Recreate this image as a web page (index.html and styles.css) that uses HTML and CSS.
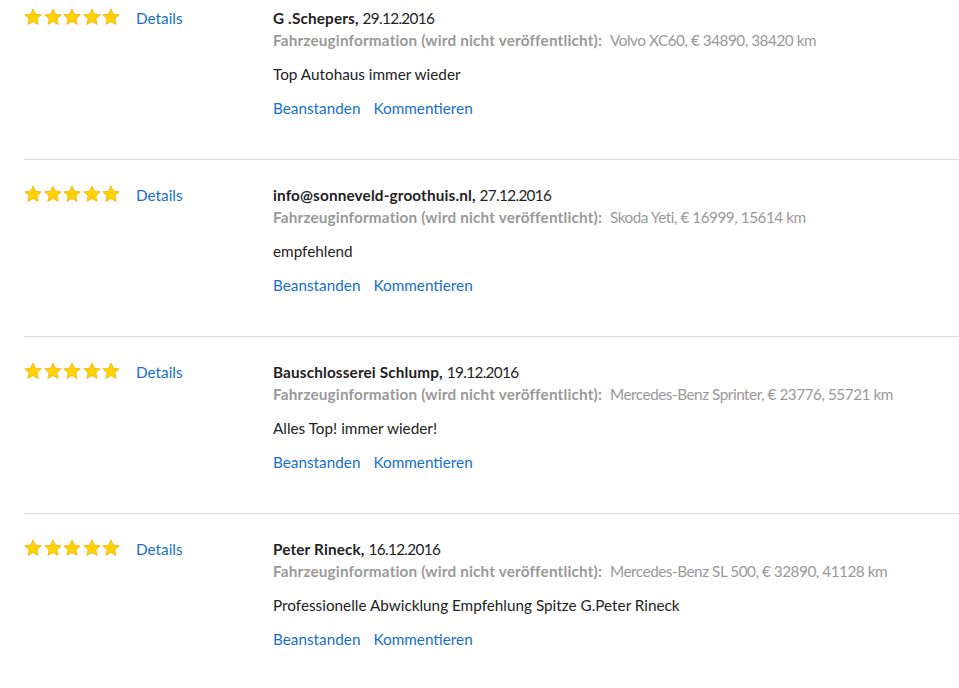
FILE: index.html
```html
<!DOCTYPE html>
<html lang="de">

<head>
    <meta charset="UTF-8">
    <meta name="viewport" content="width=device-width, initial-scale=1.0">
    <title>Bewertungen</title>
    <link rel="stylesheet" href="styles.css">
</head>

<body>
    <svg width="0" height="0" class="defs">
        <defs>
            <symbol id="star" viewBox="0 0 20 20">
                <path d="M10 1l2.7 5.9 6.4.7-4.8 4.3 1.4 6.3L10 15l-5.7 3.2 1.4-6.3-4.8-4.3 6.4-.7z" />
            </symbol>
        </defs>
    </svg>

    <ul class="reviews">
        <li class="review">
            <div class="rating">
                <span class="stars">
                    <svg><use href="#star"/></svg><svg><use href="#star"/></svg><svg><use href="#star"/></svg><svg><use href="#star"/></svg><svg><use href="#star"/></svg>
                </span>
                <a class="details">Details</a>
            </div>
            <div class="body">
                <p class="author"><b>G .Schepers,</b> <span class="date">29.12.2016</span></p>
                <p class="vehicle"><b>Fahrzeuginformation (wird nicht veröffentlicht):</b> <span class="car">Volvo XC60, € 34890, 38420 km</span></p>
                <p class="comment">Top Autohaus immer wieder</p>
                <p class="actions"><a>Beanstanden</a><a>Kommentieren</a></p>
            </div>
        </li>
        <li class="review">
            <div class="rating">
                <span class="stars">
                    <svg><use href="#star"/></svg><svg><use href="#star"/></svg><svg><use href="#star"/></svg><svg><use href="#star"/></svg><svg><use href="#star"/></svg>
                </span>
                <a class="details">Details</a>
            </div>
            <div class="body">
                <p class="author"><b>info@sonneveld-groothuis.nl,</b> <span class="date">27.12.2016</span></p>
                <p class="vehicle"><b>Fahrzeuginformation (wird nicht veröffentlicht):</b> <span class="car">Skoda Yeti, € 16999, 15614 km</span></p>
                <p class="comment">empfehlend</p>
                <p class="actions"><a>Beanstanden</a><a>Kommentieren</a></p>
            </div>
        </li>
        <li class="review">
            <div class="rating">
                <span class="stars">
                    <svg><use href="#star"/></svg><svg><use href="#star"/></svg><svg><use href="#star"/></svg><svg><use href="#star"/></svg><svg><use href="#star"/></svg>
                </span>
                <a class="details">Details</a>
            </div>
            <div class="body">
                <p class="author"><b>Bauschlosserei Schlump,</b> <span class="date">19.12.2016</span></p>
                <p class="vehicle"><b>Fahrzeuginformation (wird nicht veröffentlicht):</b> <span class="car">Mercedes-Benz Sprinter, € 23776, 55721 km</span></p>
                <p class="comment">Alles Top! immer wieder!</p>
                <p class="actions"><a>Beanstanden</a><a>Kommentieren</a></p>
            </div>
        </li>
        <li class="review">
            <div class="rating">
                <span class="stars">
                    <svg><use href="#star"/></svg><svg><use href="#star"/></svg><svg><use href="#star"/></svg><svg><use href="#star"/></svg><svg><use href="#star"/></svg>
                </span>
                <a class="details">Details</a>
            </div>
            <div class="body">
                <p class="author"><b>Peter Rineck,</b> <span class="date">16.12.2016</span></p>
                <p class="vehicle"><b>Fahrzeuginformation (wird nicht veröffentlicht):</b> <span class="car">Mercedes-Benz SL 500, € 32890, 41128 km</span></p>
                <p class="comment">Professionelle Abwicklung Empfehlung Spitze G.Peter Rineck</p>
                <p class="actions"><a>Beanstanden</a><a>Kommentieren</a></p>
            </div>
        </li>
    </ul>
</body>

</html>
```

FILE: styles.css
```css
* {
    margin: 0;
    padding: 0;
}

body {
    font-family: Lato, "Liberation Sans", sans-serif;
    font-size: 15.3px;
    line-height: 22px;
    color: #222;
    background: #fff;
}

.defs {
    position: absolute;
}

.reviews {
    list-style: none;
    padding-left: 24px;
}

.review {
    display: flex;
    padding: 24px 0 40px;
    border-bottom: 1px solid #dcdcdc;
}

.review:first-child {
    padding-top: 7px;
}

.rating {
    width: 249px;
    display: flex;
    align-items: flex-start;
}

.stars {
    display: flex;
    gap: 1.5px;
    padding-top: 1px;
}

.stars svg {
    width: 18px;
    height: 18px;
    fill: #ffd200;
    stroke: #f0ad00;
    stroke-width: 0.8;
}

.details {
    margin-left: 16px;
}

a {
    color: #1670c9;
    cursor: pointer;
}

.author b {
    font-weight: 700;
    letter-spacing: 0.15px;
}

.date {
    letter-spacing: -0.65px;
}

.car {
    letter-spacing: -0.47px;
}

.vehicle {
    color: #999;
}

.vehicle b {
    font-weight: 700;
    letter-spacing: 0.17px;
    margin-right: 4px;
}

.comment {
    margin-top: 12px;
}

.actions {
    margin-top: 12px;
    display: flex;
    gap: 13px;
}
```
